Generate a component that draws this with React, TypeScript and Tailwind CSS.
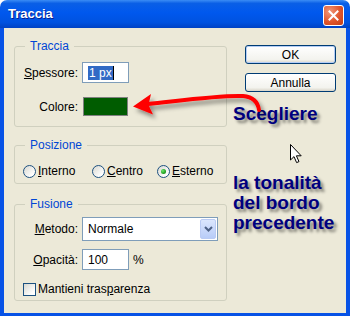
import type { ReactNode } from 'react'

const ui = "font-['Liberation_Sans',Arial,sans-serif] text-[12px] leading-[14px] text-black"

function Group({ title, children }: { title: string; children: ReactNode }) {
  return (
    <fieldset className="w-[213px] rounded-[3px] border border-[#d0d0bf] p-0">
      <legend className="ml-[10px] px-[5px] text-[12px] leading-[14px] text-[#0046d5]">{title}</legend>
      {children}
    </fieldset>
  )
}

function Radio({ checked }: { checked?: boolean }) {
  return (
    <span className="flex h-[13px] w-[13px] shrink-0 items-center justify-center rounded-full border border-[#1c5180] bg-[linear-gradient(135deg,#d8d8d0,#ffffff_80%)]">
      {checked && (
        <span className="h-[5px] w-[5px] rounded-full bg-[radial-gradient(circle_at_35%_35%,#6ee86e,#21a121_60%,#177a17)]" />
      )}
    </span>
  )
}

function Field({ label, children }: { label: ReactNode; children: ReactNode }) {
  return (
    <div className="flex items-center">
      <div className="w-[63px] text-right">{label}</div>
      <div className="ml-[4px] flex items-center">{children}</div>
    </div>
  )
}

function XpButton({ label, isDefault }: { label: string; isDefault?: boolean }) {
  return (
    <button
      className={
        isDefault
          ? 'flex h-[19px] w-[91px] items-center justify-center rounded-[3px] border border-[#003c74] bg-[linear-gradient(180deg,#ffffff,#f3f3ee_80%,#d9d5c8)] shadow-[inset_0_0_0_1px_#b4cdf5]'
          : 'flex h-[19px] w-[91px] items-center justify-center rounded-[3px] border border-[#003c74] bg-[linear-gradient(180deg,#ffffff,#f3f3ee_80%,#d9d5c8)]'
      }
    >
      {label}
    </button>
  )
}

export default function App() {
  return (
    <div className={`relative flex h-[316px] w-[350px] flex-col bg-white ${ui}`}>
      {/* Title bar */}
      <div className="flex h-[28px] shrink-0 items-center justify-between rounded-t-[7px] bg-[linear-gradient(180deg,#3b8cf5_0%,#0a5fe6_12%,#0058ee_45%,#0052e0_80%,#0042c4_100%)] pl-[8px] pr-[6px]">
        <span className="font-['Liberation_Sans',Arial,sans-serif] text-[13px] font-bold leading-[16px] text-white [text-shadow:1px_1px_0_#0a1f8f]">
          Traccia
        </span>
        <div className="mt-[2px] flex h-[21px] w-[21px] items-center justify-center rounded-[3px] border border-white bg-[radial-gradient(circle_at_30%_30%,#f0987a,#e0552c_55%,#c23e16)]">
          <svg width="11" height="11" viewBox="0 0 11 11">
            <path d="M1.5 1.5 L9.5 9.5 M9.5 1.5 L1.5 9.5" stroke="#ffffff" strokeWidth="2" strokeLinecap="square" />
          </svg>
        </div>
      </div>

      {/* Body */}
      <div className="flex flex-1 border-x-[4px] border-b-[3px] border-[#0752e6] bg-[#ece9d8] pl-[10px]">
        {/* Left column */}
        <div className="flex flex-col pt-[11px]">
          <Group title="Traccia">
            <div className="flex flex-col gap-[14px] pb-[10px] pt-[9px]">
              <Field label={<><u>S</u>pessore:</>}>
                <div className="flex h-[21px] w-[47px] items-center border border-[#7f9db9] bg-white pl-[5px]">
                  <span className="bg-[#316ac5] px-[1px] text-white">1 px</span>
                  <span className="h-[14px] w-[1px] bg-black" />
                </div>
              </Field>
              <Field label="Colore:">
                <div className="ml-[1px] h-[19px] w-[45px] border border-[#808080] bg-[#005c00]" />
              </Field>
            </div>
          </Group>

          <div className="mt-[11px]">
            <Group title="Posizione">
              <div className="flex items-center pb-[5px] pl-[8px] pt-[12px]">
                <label className="flex w-[69px] items-center gap-[2px]">
                  <Radio />
                  <span><u>I</u>nterno</span>
                </label>
                <label className="flex w-[65px] items-center gap-[2px]">
                  <Radio />
                  <span><u>C</u>entro</span>
                </label>
                <label className="flex items-center gap-[2px]">
                  <Radio checked />
                  <span><u>E</u>sterno</span>
                </label>
              </div>
            </Group>
          </div>

          <div className="mt-[13px]">
            <Group title="Fusione">
              <div className="flex flex-col pb-[4px] pt-[6px]">
                <Field label={<><u>M</u>etodo:</>}>
                  <div className="flex h-[24px] w-[136px] items-center border border-[#7f9db9] bg-white pl-[5px]">
                    <span>Normale</span>
                    <div className="ml-auto mr-[1px] flex h-[20px] w-[16px] items-center justify-center rounded-[2px] border border-[#bacbf4] bg-[linear-gradient(180deg,#dbe6fd,#b8ccf8)]">
                      <svg width="9" height="6" viewBox="0 0 9 6">
                        <path d="M1 1 L4.5 4.5 L8 1" stroke="#4d6185" strokeWidth="2" fill="none" />
                      </svg>
                    </div>
                  </div>
                </Field>
                <div className="mt-[8px]">
                  <Field label={<><u>O</u>pacità:</>}>
                    <div className="flex h-[21px] w-[47px] items-center border border-[#7f9db9] bg-white pl-[5px]">100</div>
                    <span className="ml-[4px]">%</span>
                  </Field>
                </div>
                <label className="mt-[12px] flex items-center gap-[2px] pl-[8px]">
                  <span className="h-[13px] w-[13px] border border-[#1c5180] bg-[linear-gradient(135deg,#d8d8d0,#ffffff_80%)]" />
                  <span>Mantieni tras<u>p</u>arenza</span>
                </label>
              </div>
            </Group>
          </div>
        </div>

        {/* Right column */}
        <div className="ml-[6px] flex flex-col pt-[17px]">
          <div className="ml-[12px] flex flex-col gap-[9px]">
            <XpButton label="OK" isDefault />
            <XpButton label="Annulla" />
          </div>
          <div className="mt-[12px] font-['Liberation_Sans',Arial,sans-serif] text-[19px] font-bold leading-[20px] text-[#00007e] [text-shadow:3px_3px_3px_rgba(0,0,0,0.45)]">
            Scegliere
          </div>
          <div className="pl-[57px] pt-[20px]">
            <svg width="13" height="20" viewBox="0 0 13 20">
              <path d="M0.5 0.5 L0.5 16 L4 12.6 L6.6 18.6 L9 17.6 L6.4 11.8 L11.2 11.8 Z" fill="#ffffff" stroke="#000000" strokeWidth="1" />
            </svg>
          </div>
          <div className="mt-[9px] font-['Liberation_Sans',Arial,sans-serif] text-[19px] font-bold leading-[20px] text-[#00007e] [text-shadow:3px_3px_3px_rgba(0,0,0,0.45)]">
            <div>la tonalità</div>
            <div>del bordo</div>
            <div>precedente</div>
          </div>
        </div>
      </div>

      {/* Red annotation arrow */}
      <svg className="pointer-events-none absolute left-0 top-0" width="350" height="316" viewBox="0 0 350 316">
        <defs>
          <filter id="sh" x="-20%" y="-50%" width="140%" height="200%">
            <feDropShadow dx="3" dy="4" stdDeviation="2" floodColor="#000000" floodOpacity="0.4" />
          </filter>
        </defs>
        <g filter="url(#sh)">
          <path d="M148 104 C 185 100, 220 95, 243 96 C 253 97, 258 102, 259 110" stroke="#ff0000" strokeWidth="4" strokeLinecap="round" fill="none" />
          <polygon points="133,106.5 151,94 148.5,105 153,114.5" fill="#ff0000" />
        </g>
      </svg>
    </div>
  )
}
